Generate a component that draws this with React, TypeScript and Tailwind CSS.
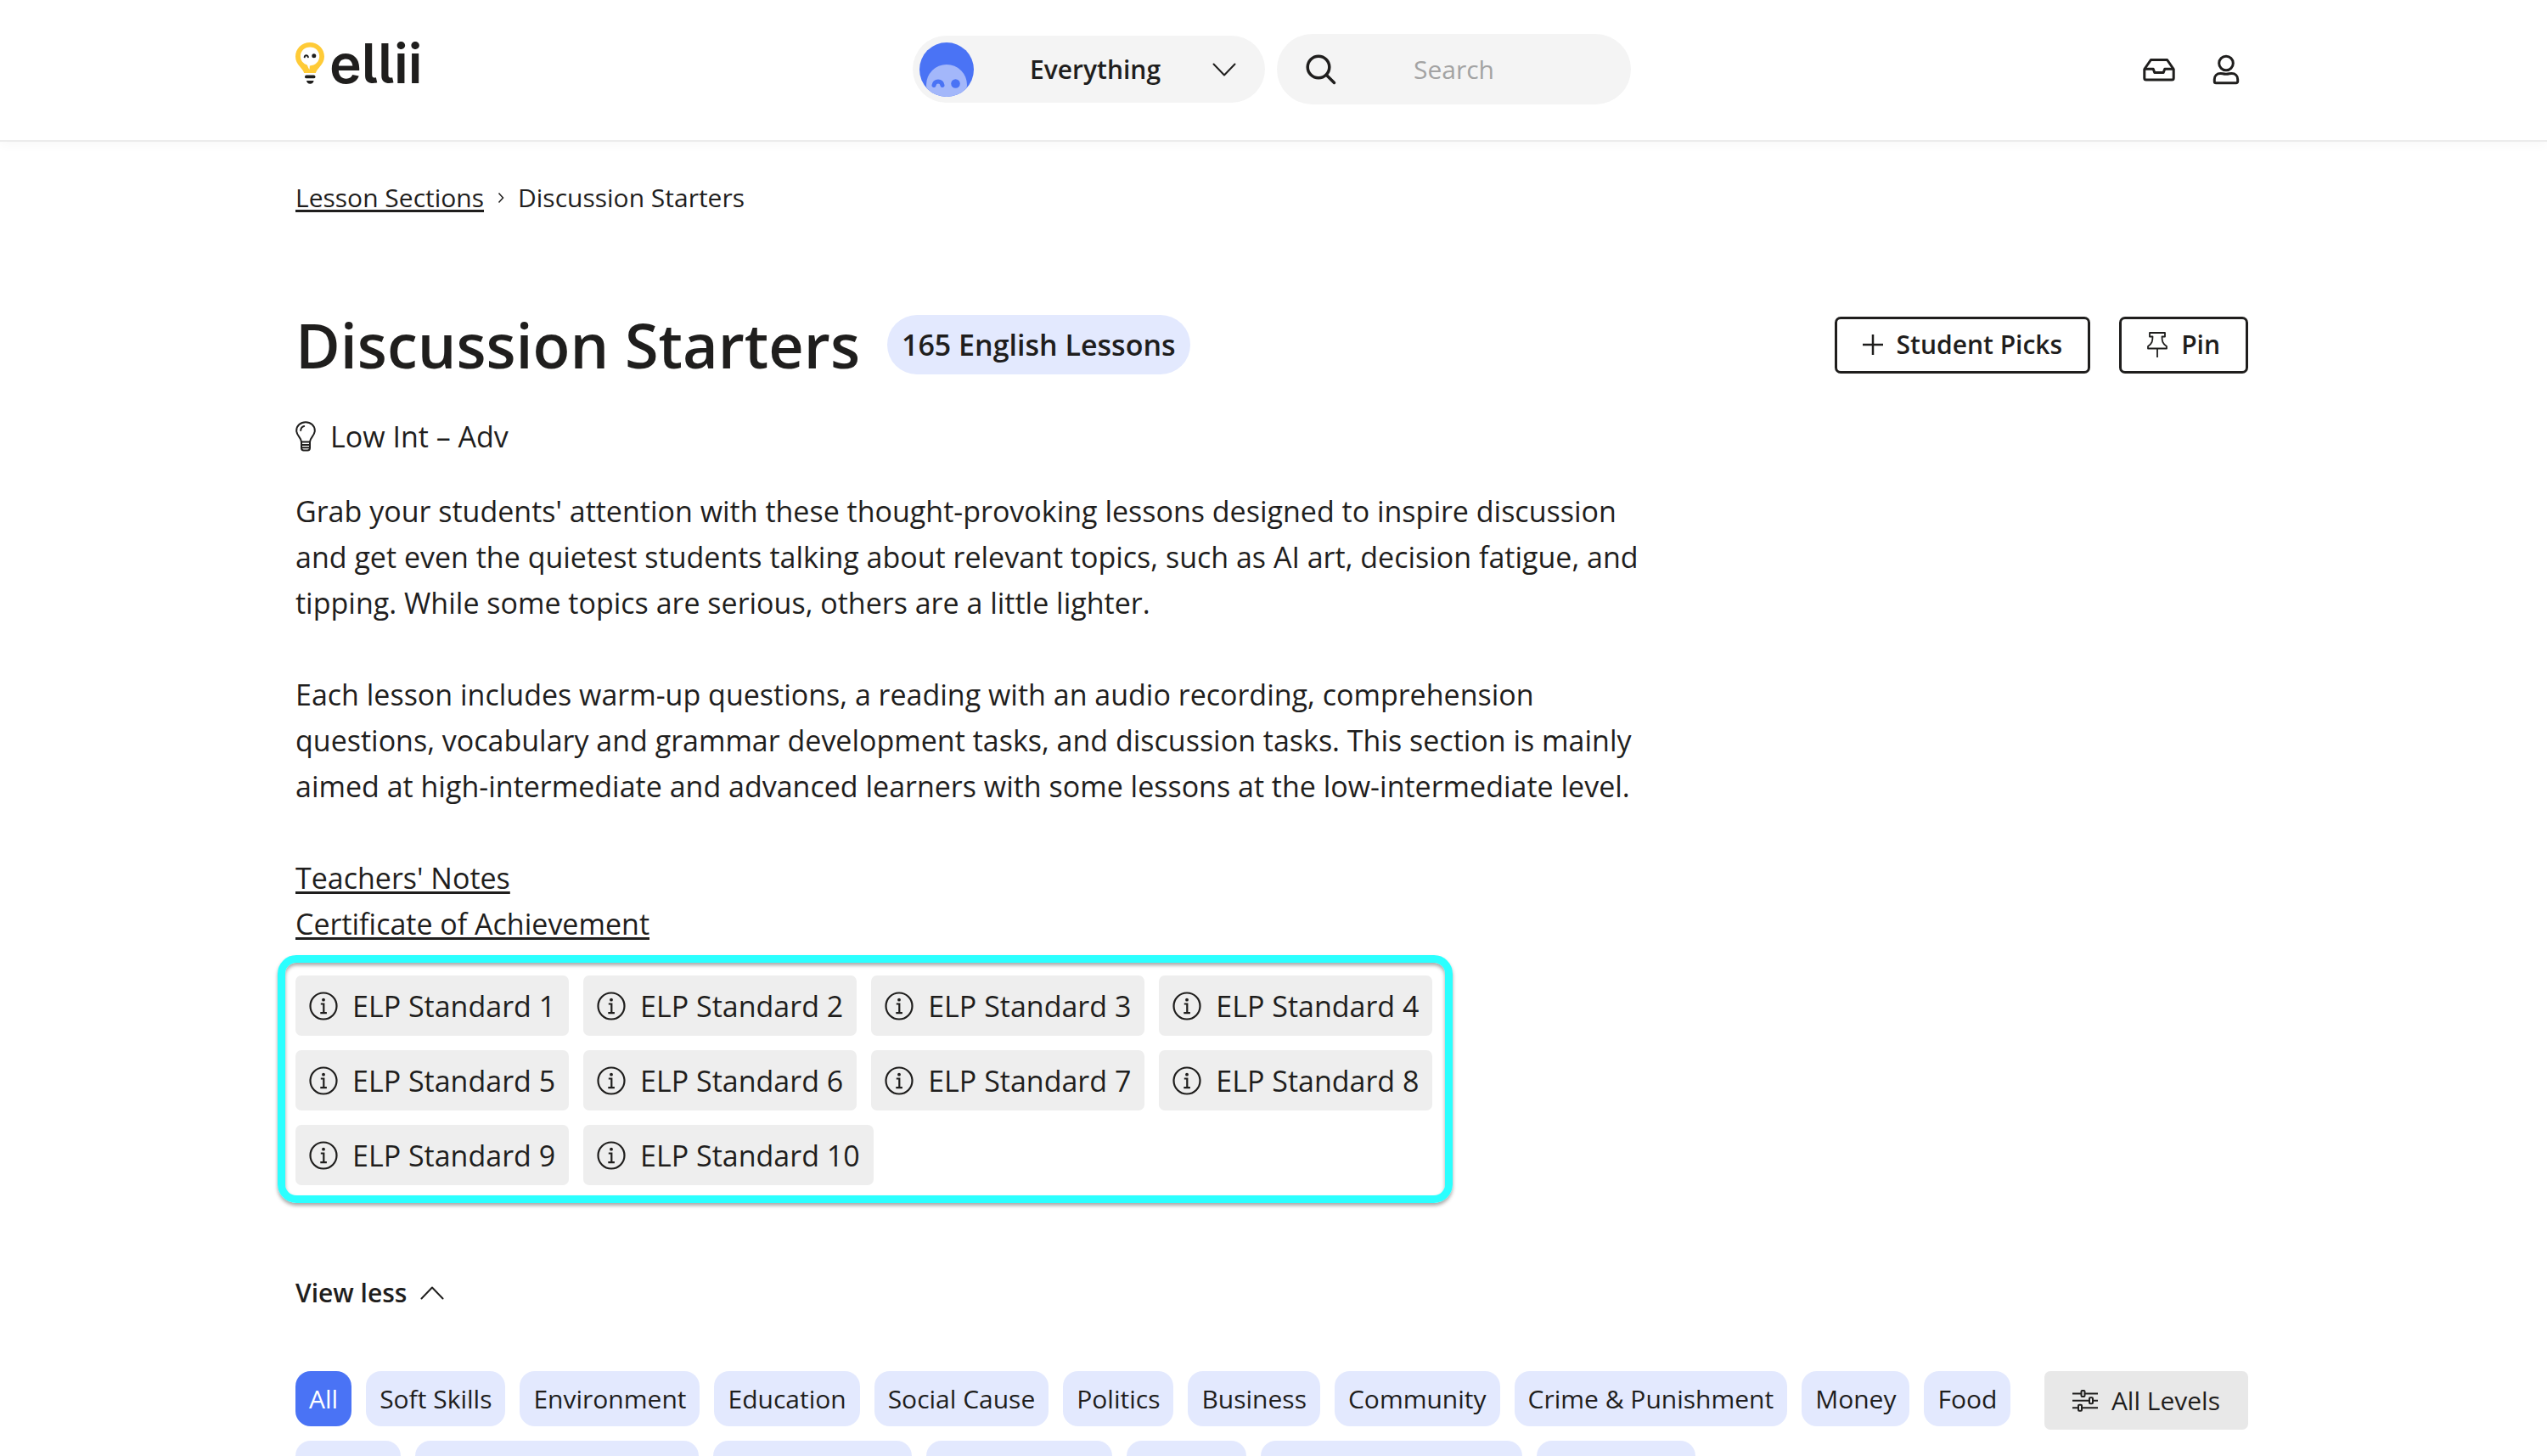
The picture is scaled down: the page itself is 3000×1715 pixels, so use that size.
import { useState } from 'react'

const STANDARDS = [1, 2, 3, 4, 5, 6, 7, 8, 9, 10]

const TOPICS = [
  'All',
  'Soft Skills',
  'Environment',
  'Education',
  'Social Cause',
  'Politics',
  'Business',
  'Community',
  'Crime & Punishment',
  'Money',
  'Food',
  'Health',
  'Science & Technology',
  'Entertainment',
  'Relationships',
  'Fashion',
  'Holidays & Festivals',
  'Psychology'
]

function Logo() {
  return (
    <a href="#" aria-label="ellii" className="flex items-center gap-[6px] text-[#1f1e1d]">
      <svg viewBox="0 0 34 49" className="h-[49px] w-[34px]">
        <path
          d="M17 0C7.600 0 0 7.400 0 16.500c0 5 2.200 8.300 5 11.700 2.300 2.700 4 4.600 5.200 7.800h13.600c1.200-3.200 2.900-5.100 5.200-7.800 2.800-3.400 5-6.700 5-11.700C34 7.400 26.400 0 17 0Z"
          fill="#ffcb37"
        />
        <path
          d="M17.200 5.500c-6.500 0-11.300 4.700-11.300 10.800 0 5 3.200 8.600 7.800 10.200 1 2.200 1.600 4 2.700 5.600.3-1.600.4-3.200.4-4.700 6.700-.2 11.400-4.900 11.400-11.100 0-6.100-4.700-10.800-11-10.800Z"
          fill="#fff"
        />
        <path d="M10.700 17.300c.4-2.800 3.600-2.800 4.200 0" fill="none" stroke="#1f1e1d" strokeWidth="2" strokeLinecap="round" />
        <circle cx="21.800" cy="15.700" r="2.500" fill="#1f1e1d" />
        <rect x="11" y="38.500" width="12.500" height="3.800" rx="1.900" fill="#1f1e1d" />
        <path d="M13 45h8.600c-.4 2.400-1.800 3.800-4.300 3.800S13.400 47.400 13 45Z" fill="#1f1e1d" />
      </svg>
      <span className="font-['Inter',sans-serif] text-[64px] leading-[64px] font-semibold [font-feature-settings:'cv05']">ellii</span>
    </a>
  )
}

function Avatar() {
  return (
    <svg viewBox="0 0 64 64" className="size-16 shrink-0">
      <clipPath id="face">
        <circle cx="32" cy="32" r="32" />
      </clipPath>
      <g clipPath="url(#face)">
        <rect width="64" height="64" fill="#4a73f5" />
        <circle cx="32" cy="50" r="24" fill="#a3b7fa" />
        <path d="M17 50.500c1-6 9-6 10 0" fill="none" stroke="#4a73f5" strokeWidth="5" strokeLinecap="round" />
        <circle cx="42.500" cy="48.500" r="5.300" fill="#4a73f5" />
      </g>
    </svg>
  )
}

function Chevron({ className }: { className: string }) {
  return (
    <svg viewBox="0 0 28 16" className={className} fill="none" stroke="#1f1e1d" strokeWidth="2" strokeLinecap="round" strokeLinejoin="round">
      <path d="M1.500 1.500 14 14.500 26.500 1.500" />
    </svg>
  )
}

function InfoIcon() {
  return (
    <svg viewBox="0 0 34 34" className="size-[34px] shrink-0" fill="none" stroke="#1f1e1d">
      <circle cx="17" cy="17" r="15.500" strokeWidth="2.200" />
      <circle cx="17" cy="9.700" r="1.900" fill="#1f1e1d" stroke="none" />
      <path d="M13.800 14.500h3.500v10.500M13.300 25.200h7.600" strokeWidth="2.200" />
    </svg>
  )
}

function Header() {
  return (
    <header className="border-b-2 border-[#ececec] bg-white pr-1 shadow-[0_2px_14px_rgba(0,0,0,0.04)]">
      <div className="mx-auto grid h-[165px] w-full max-w-[2300px] grid-cols-[1fr_auto_1fr] items-center pb-[2px]">
        <div className="pb-[14px]">
          <Logo />
        </div>

        <div className="flex items-center gap-[14px]">
          <div className="relative flex h-[79px] w-[415px] items-center rounded-full bg-[#f4f4f4] px-2">
            <Avatar />
            <select
              aria-label="Content type"
              className="absolute inset-0 w-full appearance-none rounded-full bg-transparent pl-[138px] font-semibold"
            >
              <option>Everything</option>
            </select>
            <Chevron className="mr-[26px] ml-auto h-4 w-7" />
          </div>
          <label className="flex h-[83px] w-[417px] items-center rounded-full bg-[#f4f4f4] pl-[34px]">
            <svg viewBox="0 0 36 36" className="size-9 shrink-0" fill="none" stroke="#1f1e1d" strokeWidth="3.500" strokeLinecap="round">
              <circle cx="15" cy="15" r="12.800" />
              <path d="m24.500 24.500 9 9" />
            </svg>
            <input
              type="search"
              aria-label="Search"
              placeholder="Search"
              className="ml-[91px] w-full min-w-0 bg-transparent outline-none placeholder:text-[#a3a3a3]"
            />
          </label>
        </div>

        <div className="flex items-center justify-end gap-[44px] pr-[10px]">
          <button type="button" aria-label="Inbox">
            <svg viewBox="0 0 38 28" className="h-7 w-[38px]" fill="none" stroke="#1f1e1d" strokeWidth="3" strokeLinejoin="round">
              <path d="M1.800 13.500 9.400 2.500h19.200l7.600 11v10.500a2 2 0 0 1-2 2H3.800a2 2 0 0 1-2-2Z" />
              <path d="M1.800 13.200h10.400l1.600 4.300h10.400l1.600-4.300h10.400" />
            </svg>
          </button>
          <button type="button" aria-label="Account">
            <svg viewBox="0 0 32 36" className="h-9 w-8" fill="none" stroke="#1f1e1d" strokeWidth="3" strokeLinejoin="round">
              <circle cx="16" cy="10.500" r="8.300" />
              <path d="M9.500 22.500c2.300 0 3 .8 6.500.8s4.200-.8 6.500-.8c4.500 0 7.200 3 7.200 7V32a1.800 1.800 0 0 1-1.800 1.800H4.100A1.800 1.800 0 0 1 2.300 32v-2.500c0-4 2.700-7 7.200-7Z" />
            </svg>
          </button>
        </div>
      </div>
    </header>
  )
}

export default function App() {
  const [topic, setTopic] = useState('All')

  return (
    <div className="min-h-screen bg-white font-['Open_Sans',sans-serif] text-[30px] leading-[42px] text-[#1f1e1d]">
      <Header />

      <main className="pr-1">
        <div className="mx-auto w-full max-w-[2300px] pt-[45px]">
          <nav className="flex items-center gap-4">
            <a href="#" className="underline decoration-[3px] underline-offset-[3px]">Lesson Sections</a>
            <svg viewBox="0 0 8 14" className="h-[14px] w-2" fill="none" stroke="#1f1e1d" strokeWidth="1.500">
              <path d="m1.500 1.500 5 5.500-5 5.500" />
            </svg>
            <span>Discussion Starters</span>
          </nav>

          <div className="mt-[97px] flex items-center justify-between">
            <div className="flex items-center gap-8">
              <h1 className="text-[72px] leading-[110px] font-semibold">Discussion Starters</h1>
              <span className="rounded-full bg-[#e3e9fe] px-[17px] py-2 text-[34px] leading-[54px] font-semibold">165 English Lessons</span>
            </div>
            <div className="flex gap-[34px] font-semibold">
              <button type="button" className="flex h-[67px] items-center gap-4 rounded-[7px] border-[3px] border-[#1f1e1d] px-[30px]">
                <svg viewBox="0 0 24 24" className="size-6" stroke="#1f1e1d" strokeWidth="2.500">
                  <path d="M12 0v24M0 12h24" />
                </svg>
                Student Picks
              </button>
              <button type="button" className="flex h-[67px] items-center gap-4 rounded-[7px] border-[3px] border-[#1f1e1d] px-[30px]">
                <svg viewBox="0 0 24 30" className="h-[30px] w-6" fill="none" stroke="#1f1e1d" strokeWidth="1.800" strokeLinejoin="round">
                  <path d="M3 1h18v4.500h-3.500c0 5 .5 8 5.500 11.500v2.500H1V17c5-3.500 5.500-6.500 5.500-11.500H3ZM12 19.500V30" />
                </svg>
                Pin
              </button>
            </div>
          </div>

          <div className="mt-[26px] flex items-center gap-[17px] text-[34px] leading-[54px]">
            <svg viewBox="0 0 24 36" className="h-9 w-6" fill="none" stroke="#1f1e1d" strokeWidth="2" strokeLinecap="round" strokeLinejoin="round">
              <path d="M7 24.500c0-5-5.800-7-5.800-13.300C1.200 5.300 6 1.200 12 1.200s10.800 4.100 10.800 10c0 6.300-5.800 8.300-5.800 13.300Z" />
              <path d="M7 24.500v7c0 1.800 1 3 2.700 3h4.600c1.700 0 2.700-1.200 2.700-3v-7M7 28h10M7 31.300h10M6.200 11c.2-2.700 1.600-4.500 4-5" />
            </svg>
            Low Int – Adv
          </div>

          <div className="mt-[34px] flex max-w-[1600px] flex-col gap-[54px] text-[34px] leading-[54px]">
            <p>
              Grab your students' attention with these thought-provoking lessons designed to inspire discussion and get even the
              quietest students talking about relevant topics, such as AI art, decision fatigue, and tipping. While some topics
              are serious, others are a little lighter.
            </p>
            <p>
              Each lesson includes warm-up questions, a reading with an audio recording, comprehension questions, vocabulary and
              grammar development tasks, and discussion tasks. This section is mainly aimed at high-intermediate and advanced
              learners with some lessons at the low-intermediate level.
            </p>
            <div className="flex flex-col items-start">
              <a href="#" className="underline decoration-[3px] underline-offset-[3px]">Teachers' Notes</a>
              <a href="#" className="underline decoration-[3px] underline-offset-[3px]">Certificate of Achievement</a>
            </div>
          </div>

          <div className="mt-[10px] -ml-[21px] w-[1384px] rounded-[22px] border-[9px] border-[#2bffff] px-3 pt-[15px] pb-3 shadow-[0_3px_4px_rgba(0,0,0,0.35),inset_0_3px_4px_rgba(0,0,0,0.35)]">
            <ul className="flex flex-wrap gap-[17px] text-[34px]">
              {STANDARDS.map(n => (
                <li key={n}>
                  <button type="button" className="flex h-[71px] items-center gap-[17px] rounded-[7px] bg-[#eeeeee] px-4">
                    <InfoIcon />
                    ELP Standard {n}
                  </button>
                </li>
              ))}
            </ul>
          </div>

          <button type="button" className="mt-[85px] flex items-center gap-4 font-semibold">
            View less
            <Chevron className="h-4 w-7 rotate-180" />
          </button>

          <div className="mt-[71px] flex items-start gap-[34px]">
            <div className="flex flex-1 flex-wrap gap-[17px]">
              {TOPICS.map(t => (
                <button
                  key={t}
                  type="button"
                  onClick={() => setTopic(t)}
                  className={
                    t === topic
                      ? 'h-[65px] rounded-[18px] bg-[#4a73f5] px-4 text-white'
                      : 'h-[65px] rounded-[18px] bg-[#e3e9fe] px-4'
                  }
                >
                  {t}
                </button>
              ))}
            </div>
            <button type="button" className="flex h-[69px] items-center gap-4 rounded-[7px] bg-[#e8e8e8] px-[33px]">
              <svg viewBox="0 0 30 26" className="h-[26px] w-[30px]" fill="none" stroke="#1f1e1d" strokeWidth="2">
                <path d="M0 4.500h10M15 4.500h15M0 12.700h19.500M24.500 12.700H30M0 21.300h6.500M11.500 21.300H30" />
                <rect x="10.500" y="1" width="4" height="7" rx="1" />
                <rect x="20" y="9.200" width="4" height="7" rx="1" />
                <rect x="7" y="17.800" width="4" height="7" rx="1" />
              </svg>
              All Levels
            </button>
          </div>
        </div>
      </main>
    </div>
  )
}
